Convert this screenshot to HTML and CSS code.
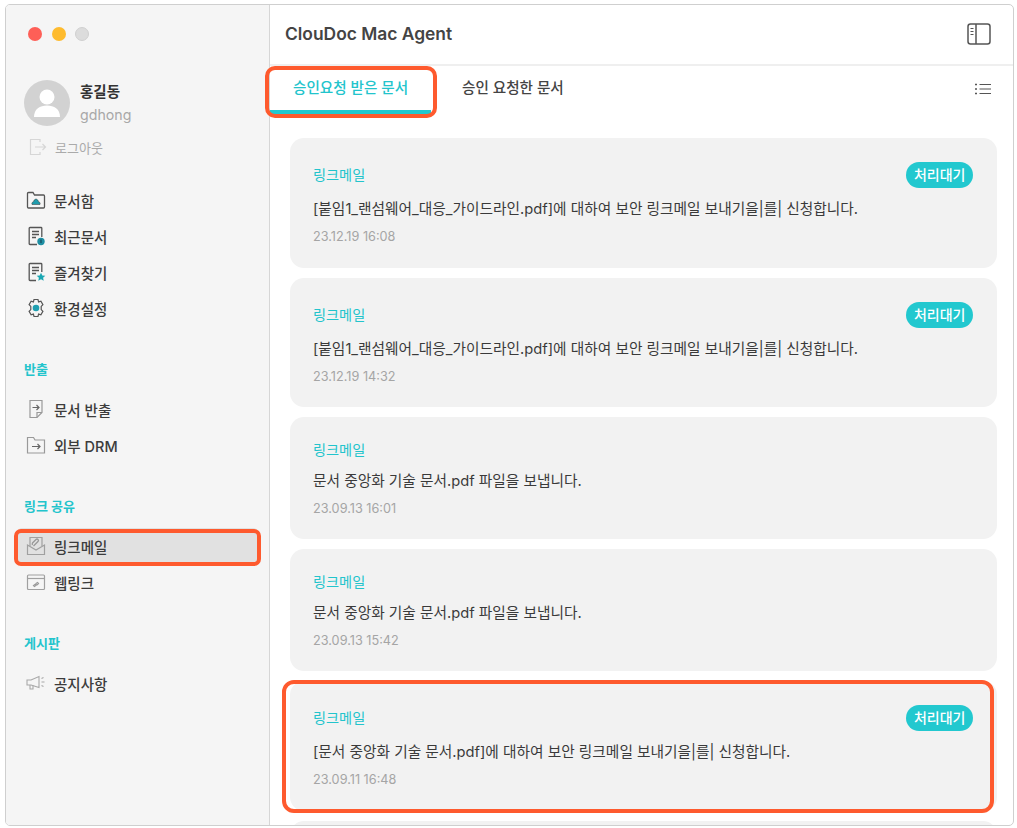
FILE: index.html
```html
<!DOCTYPE html>
<html lang="ko">
<head>
<meta charset="utf-8">
<title>ClouDoc Mac Agent</title>
<link rel="stylesheet" href="styles.css">
</head>
<body>
<div class="window">
  <aside class="sidebar">
    <div class="lights"><span class="light red"></span><span class="light yellow"></span><span class="light gray"></span></div>
    <div class="profile">
      <svg class="avatar" viewBox="0 0 46 46"><circle cx="23" cy="23" r="23" fill="#d2d2d2"/><circle cx="23" cy="17" r="7.500" fill="#fff"/><path d="M10 37c0-8 6-11.500 13-11.500S36 29 36 37z" fill="#fff"/></svg>
      <div class="who"><div class="name">홍길동</div><div class="uid">gdhong</div></div>
    </div>
    <div class="logout">
      <svg class="ico" viewBox="0 0 20 20" fill="none" stroke="#d6d6d6" stroke-width="1.200"><path d="M13 5V2.500H3.500v15H13V15"/><path d="M8 10h10.500M15.500 7l3 3-3 3"/></svg>
      <span>로그아웃</span>
    </div>
    <nav class="group first">
      <div class="item"><svg class="ico" viewBox="0 0 20 20" fill="none" stroke="#555" stroke-width="1.300"><path d="M1.500 3.500a1 1 0 0 1 1-1h4.500l1.500 2.500h9a1 1 0 0 1 1 1v11a1 1 0 0 1-1 1h-15a1 1 0 0 1-1-1z"/><path d="M6 14.500c-.6-1.800.6-2.600 1.500-2.800.4-1.500 1.400-2.600 2.500-2.600s2.100 1.100 2.500 2.600c.9.200 2.100 1 1.500 2.800z" fill="#1f9cad" stroke="#333" stroke-width=".5"/></svg><span>문서함</span></div>
      <div class="item"><svg class="ico" viewBox="0 0 20 20" fill="none" stroke="#555" stroke-width="1.300"><path d="M11 18.500H4a.8.800 0 0 1-.8-.8V2.300A.8.800 0 0 1 4 1.500h11a.8.800 0 0 1 .8.800V11"/><path d="M6 5.500h7M6 8.500h7M6 11.500h4"/><circle cx="15" cy="15.500" r="3.700" fill="#1f8fa3" stroke="none"/><path d="M15 13.500v3.500" stroke="#123" stroke-width=".8"/></svg><span>최근문서</span></div>
      <div class="item"><svg class="ico" viewBox="0 0 20 20" fill="none" stroke="#555" stroke-width="1.300"><path d="M10 18.500H4a.8.800 0 0 1-.8-.8V2.300A.8.800 0 0 1 4 1.500h11a.8.800 0 0 1 .8.800V10"/><path d="M6 5.500h7M6 8.500h7M6 11.500h4"/><path d="M15 10.800l1.300 2.700 3 .3-2.200 2 .6 3-2.700-1.500-2.700 1.500.6-3-2.200-2 3-.3z" fill="#1aa7b3" stroke="none"/></svg><span>즐겨찾기</span></div>
      <div class="item"><svg class="ico" viewBox="0 0 20 20" fill="none" stroke="#555" stroke-width="1.200"><path d="M8 1.500h4l.6 2.400 2.300-.7 2 3.400-1.700 1.800v3.200l1.700 1.800-2 3.400-2.300-.7-.6 2.400H8l-.6-2.400-2.300.7-2-3.400 1.700-1.800V8.400L3.100 6.600l2-3.400 2.300.7z"/><circle cx="10" cy="10" r="3.300" fill="#1f9fb0" stroke="none"/></svg><span>환경설정</span></div>
    </nav>
    <div class="label">반출</div>
    <nav class="group">
      <div class="item"><svg class="ico" viewBox="0 0 20 20" fill="none" stroke="#999" stroke-width="1.200"><path d="M4 1.500h12v12l-5 5H4z"/><path d="M16 13.500h-5v5"/><path d="M6.500 8.500h6.500M10.500 6l2.500 2.500L10.500 11" stroke="#666"/></svg><span>문서 반출</span></div>
      <div class="item"><svg class="ico" viewBox="0 0 20 20" fill="none" stroke="#999" stroke-width="1.200"><path d="M1.500 2.500h6l1.500 2.500h9.500v13h-17z"/><path d="M6 11.500h8M11.500 9l2.500 2.500L11.500 14" stroke="#666"/></svg><span>외부 DRM</span></div>
    </nav>
    <div class="label">링크 공유</div>
    <nav class="group">
      <div class="item active"><svg class="ico" viewBox="0 0 20 20" fill="none" stroke="#a0a0a0" stroke-width="1.200"><path d="M1.500 9v9.500h17V9L10 14z"/><path d="M4 10V1.500h12V10"/><path d="M7.500 10l4.500-4.500a1.400 1.400 0 0 0-2-2L6.500 7a2 2 0 0 0 0 2" stroke="#999" stroke-width="1.300"/></svg><span>링크메일</span><span class="mark mark-nav"></span></div>
      <div class="item"><svg class="ico" viewBox="0 0 20 20" fill="none" stroke="#a0a0a0" stroke-width="1.200"><rect x="1.500" y="3" width="17" height="14.500" rx="1"/><path d="M1.500 6.500h17"/><path d="M7.500 13.500l1 1 2-1.500-1-1zM10 11.500l1.500-1 1 1-1.500 1.500" stroke="#999"/></svg><span>웹링크</span></div>
    </nav>
    <div class="label">게시판</div>
    <nav class="group">
      <div class="item"><svg class="ico" viewBox="0 0 20 20" fill="none" stroke="#a8a8a8" stroke-width="1.100"><path d="M1 7h4l8-3.500v11L5 12H1z"/><path d="M4 12v4h3v-3.500"/><path d="M15.500 5.500l2-1M15.500 9h3M15.500 12.500l2 1"/></svg><span>공지사항</span></div>
    </nav>
  </aside>
  <main class="main">
    <header class="titlebar">
      <h1>ClouDoc Mac Agent</h1>
      <svg class="panel-ico" viewBox="0 0 24 22" fill="none" stroke="#555" stroke-width="1.500"><rect x="1" y="1" width="22" height="20" rx="2.500"/><path d="M9 1v20"/><path d="M3.500 5.500h3M3.500 8.500h3M3.500 11.500h3" stroke-width="1.200"/></svg>
    </header>
    <div class="tabs">
      <div class="tab on">승인요청 받은 문서<span class="mark mark-tab"></span></div>
      <div class="tab">승인 요청한 문서</div>
      <svg class="list-ico" viewBox="0 0 16 12" fill="none" stroke="#555" stroke-width="1.100"><path d="M4.500 1.500H16M4.500 6H16M4.500 10.500H16"/><path d="M0 1.500h2M0 6h2M0 10.500h2" stroke-width="1.300"/></svg>
    </div>
    <div class="cards">
      <article class="card tall">
        <div class="top"><span class="kind">링크메일</span><span class="badge">처리대기</span></div>
        <p class="msg">[붙임1_랜섬웨어_대응_가이드라인.pdf]에 대하여 보안 링크메일 보내기을|를| 신청합니다.</p>
        <time class="date">23.12.19 16:08</time>
      </article>
      <article class="card tall">
        <div class="top"><span class="kind">링크메일</span><span class="badge">처리대기</span></div>
        <p class="msg">[붙임1_랜섬웨어_대응_가이드라인.pdf]에 대하여 보안 링크메일 보내기을|를| 신청합니다.</p>
        <time class="date">23.12.19 14:32</time>
      </article>
      <article class="card">
        <div class="top"><span class="kind">링크메일</span></div>
        <p class="msg">문서 중앙화 기술 문서.pdf 파일을 보냅니다.</p>
        <time class="date">23.09.13 16:01</time>
      </article>
      <article class="card">
        <div class="top"><span class="kind">링크메일</span></div>
        <p class="msg">문서 중앙화 기술 문서.pdf 파일을 보냅니다.</p>
        <time class="date">23.09.13 15:42</time>
      </article>
      <article class="card tall">
        <div class="top"><span class="kind">링크메일</span><span class="badge">처리대기</span></div>
        <p class="msg">[문서 중앙화 기술 문서.pdf]에 대하여 보안 링크메일 보내기을|를| 신청합니다.</p>
        <time class="date">23.09.11 16:48</time>
        <span class="mark mark-card"></span>
      </article>
      <article class="card tall"></article>
    </div>
  </main>
</div>
</body>
</html>
```
FILE: styles.css
```css
* { box-sizing: border-box; }
html, body { margin: 0; height: 100%; background: #fff; overflow: hidden; }
body { padding: 4px 3px 2px 5px; font-family: Inter, "Noto Sans CJK KR", sans-serif; color: #333; }
.window { display: flex; height: 822px; border: 1px solid #cfcfcf; border-radius: 5px; overflow: hidden; background: #fff; }
.sidebar { width: 264px; flex: none; background: #f5f5f5; border-right: 1px solid #d6d6d6; padding: 22px 0 0; position: relative; }
.lights { display: flex; gap: 9.500px; padding-left: 22px; }
.light { width: 14px; height: 14px; border-radius: 50%; }
.red { background: #fe5f57; }
.yellow { background: #febb2e; }
.gray { background: #dcdcdc; border: 1px solid #d0d0d0; }
.profile { display: flex; align-items: center; gap: 10px; margin: 39px 0 0 18px; }
.avatar { width: 46px; height: 46px; display: block; }
.name { font-size: 14.500px; font-weight: 700; line-height: 20px; color: #333; }
.uid { font-size: 14.200px; line-height: 20px; color: #a8a8a8; margin-top: 3px; }
.logout { display: flex; align-items: center; gap: 8px; margin: 9px 0 0 21px; font-size: 13px; color: #aaa; height: 24px; }
.ico { width: 20px; height: 20px; flex: none; display: block; }
.group { display: flex; flex-direction: column; padding: 0 12px; }
.group.first { margin-top: 23px; }
.item { position: relative; display: flex; align-items: center; gap: 8px; height: 36px; padding-left: 8px; font-size: 14.500px; font-weight: 500; color: #3c3c3c; border-radius: 4px; }
.item.active { background: #e1e1e1; }
.label { font-size: 13px; font-weight: 700; color: #22c4cc; padding-left: 18px; line-height: 18px; margin: 34px 0 13px; }
.mark { position: absolute; border: 4px solid #fe5a2e; pointer-events: none; }
.mark-nav { inset: 1px -4px -2px -4px; border-radius: 7px; }
.main { flex: 1; min-width: 0; display: flex; flex-direction: column; }
.titlebar { height: 61px; flex: none; display: flex; align-items: center; justify-content: space-between; padding: 0 22px 3px 15px; border-bottom: 2px solid #efefef; }
.titlebar h1 { margin: 0; font-size: 17.400px; font-weight: 600; color: #444; }
.panel-ico { width: 24px; height: 22px; display: block; margin-top: 2px; }
.tabs { height: 52px; flex: none; display: flex; align-items: flex-start; position: relative; }
.tab { position: relative; height: 48px; font-size: 14.600px; font-weight: 500; line-height: 44px; color: #444; padding-left: 31px; }
.tab.on { width: 161px; padding-left: 23px; color: #22c4cc; border-bottom: 4px solid #22c8cf; }
.mark-tab { inset: 0 -6px -8px -5px; border-radius: 10px; }
.list-ico { position: absolute; right: 22px; top: 17px; width: 16px; height: 12px; }
.cards { flex: 1; min-height: 0; overflow: hidden; display: flex; flex-direction: column; gap: 10px; padding: 20px 16px 0 19.500px; }
.card { position: relative; flex: none; height: 122px; background: #f2f2f2; border-radius: 14px; padding: 20px 24px 0 23.500px; }
.card.tall { height: 129.500px; padding-top: 24px; }
.top { display: flex; justify-content: space-between; align-items: center; height: 26px; }
.kind { font-size: 14.200px; color: #22c4cc; margin-top: -2px; }
.badge { font-size: 14px; font-weight: 500; line-height: 26px; height: 26px; padding: 0 7.500px; border-radius: 13px; background: #22c8cf; color: #fff; }
.msg { margin: 8px 0 0; font-size: 14.700px; line-height: 20px; color: #3a3a3a; }
.tall .msg { margin-top: 11px; }
.date { display: block; margin-top: 10px; font-size: 12.700px; line-height: 16px; color: #a5a5a5; }
.tall .date { margin-top: 10px; }
.mark-card { inset: -1px 3px -2px -7.500px; border-radius: 12px; }
```
